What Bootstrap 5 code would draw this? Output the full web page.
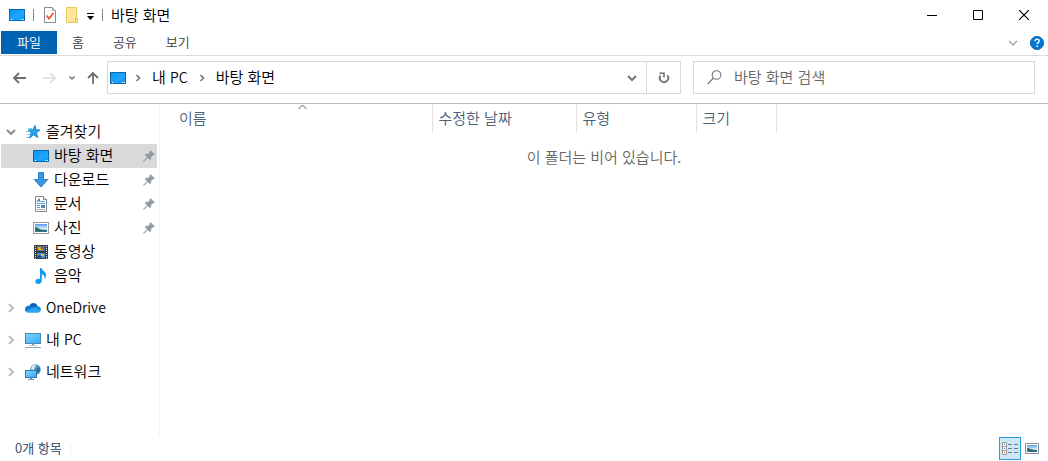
<!DOCTYPE html>
<html lang="ko">
<head>
<meta charset="utf-8">
<meta name="viewport" content="width=device-width, initial-scale=1">
<title>바탕 화면</title>
<link rel="stylesheet" href="https://cdn.jsdelivr.net/npm/bootstrap@5.3.0/dist/css/bootstrap.min.css">
<style>
  body { font-family: "Noto Sans CJK KR", sans-serif; font-size: 15px; font-weight: 350; line-height: 24px; color: #000; background: #fff; }
  svg { display: block; flex: none; }
  button { border: 0; padding: 0; background: none; color: inherit; font-size: inherit; font-weight: inherit; line-height: inherit; display: flex; align-items: center; justify-content: center; }
  .latin { font-size: 14px; }

  /* title bar */
  .titlebar { height: 30px; padding: 0 1px 0 9px; margin-bottom: 1px; }
  .tb-line { width: 1px; height: 12px; background: #888; }
  .tool-set { gap: 8px; }
  .win-btn { width: 46px; height: 30px; }

  /* ribbon tabs */
  .ribbon { height: 25px; padding-left: 1px; gap: 1px; border-bottom: 1px solid #dadbdc; font-size: 13px; color: #3b3b3b; }
  .ribbon-tab { height: 23px; padding: 0 14px 2px; }
  .ribbon-tab.file { background: #0063b1; color: #fff; padding: 0 16px 2px; }

  /* address row */
  .nav-row { height: 48px; border-bottom: 1px solid #b9b9b9; padding: 5px 13px 9px; }
  .history { gap: 12px; }
  .crumb-btn { padding: 0 2px 2px; }
  .field-row { display: grid; grid-template-columns: 574fr 342fr; gap: 12px; }
  .field-box { height: 33px; border: 1px solid #d9d9d9; min-width: 0; }
  .reload { width: 34px; border-left: 1px solid #d9d9d9; }
  .search-input { border: 0; outline: 0; padding: 0 0 2px; background: none; min-width: 0; color: #666; font-size: 15px; font-weight: inherit; line-height: 24px; }
  .search-input::placeholder { color: #666; opacity: 1; }

  /* navigation pane */
  .side { width: 160px; padding: 16px 2px 0 1px; border-right: 1px solid #f2f2f2; }
  .tree a { height: 24px; color: #000; text-decoration: none; padding-right: 2px; display: flex; align-items: center; }
  .tree .top-item { padding-left: 4px; }
  .tree .sub-item { padding-left: 32px; }
  .tree a.current { background: #d9d9d9; }
  .tree svg.twist { margin-right: 8px; }
  .tree .label { padding: 0 0 2px 5px; flex: 1; }

  /* file list */
  .files { table-layout: fixed; width: 100%; }
  .files th { font-weight: inherit; color: #4c607a; height: 28px; padding: 0 0 0 6px; border-right: 1px solid #e2e2e2; position: relative; }
  .files th:first-child { padding-left: 19px; }
  .files th.rest { border: 0; }
  .files td { padding: 13px 0 0; text-align: center; color: #666; }
  .sort-mark { position: absolute; top: 0; left: 51%; }

  /* status bar */
  .status { height: 25px; padding: 0 6px 0 15px; font-size: 13px; color: #1e395b; }
  .status-text { padding-bottom: 2px; }
  .status-line { width: 1px; height: 11px; background: #eee; }
  .view-btn { width: 21px; height: 23px; }
  .view-btn.on { width: 22px; background: #cce8f6; border: 1px solid #26a0da; }
</style>
</head>
<body>
<svg width="0" height="0" class="position-absolute" aria-hidden="true">
  <defs>
    <linearGradient id="gBlue" x1="0" y1="0" x2="1" y2="1"><stop offset="0" stop-color="#0a93f5"/><stop offset=".6" stop-color="#1fa6ff"/><stop offset="1" stop-color="#1295f2"/></linearGradient>
    <linearGradient id="gScreen" x1="0" y1="0" x2="1" y2="1"><stop offset="0" stop-color="#7fd3ff"/><stop offset=".5" stop-color="#58c2fd"/><stop offset="1" stop-color="#2fa8f5"/></linearGradient>
    <linearGradient id="gSky" x1="0" y1="0" x2="0" y2="1"><stop offset="0" stop-color="#4f97e8"/><stop offset=".55" stop-color="#d7ecfa"/><stop offset="1" stop-color="#8fc0dd"/></linearGradient>
    <symbol id="desk" viewBox="0 0 16 16">
      <rect x=".5" y="2.5" width="15" height="11" fill="url(#gBlue)" stroke="#0867ae"/>
      <path d="M2 12.500h1M12 12.500h1M14 12.500h1" stroke="#fff"/>
    </symbol>
    <symbol id="picture" viewBox="0 0 16 16">
      <rect x=".5" y="2.5" width="15" height="11" fill="#fff" stroke="#9a9a9a"/>
      <rect x="2" y="4" width="12" height="8" fill="url(#gSky)"/>
      <path d="M2 7c2 0 4 1.500 6 2.500 2 .5 4 .3 6 .5v1H2z" fill="#35705c"/>
      <path d="M2 11h12v1H2z" fill="#2f6fa3"/>
    </symbol>
    <symbol id="pin" viewBox="0 0 12 12">
      <path d="M7.500.5l4 4-1 .6-.7-.1-2 2c.3 1.200 0 2.200-.7 3L4.800 7.700 1.200 11.300.5 11.500l.2-.7L4.300 7.200 2 4.900c.8-.7 1.800-1 3-.7l2-2-.1-.7z" fill="#8f9aa3" stroke="#8f9aa3" stroke-width=".5"/>
    </symbol>
    <symbol id="closed" viewBox="0 0 12 12"><path d="M4 2l4 4-4 4" fill="none" stroke="#bcbcbc" stroke-width="1.800"/></symbol>
    <symbol id="crumb" viewBox="0 0 8 8"><path d="M2.500 1l3 3-3 3" fill="none" stroke="#757575" stroke-width="1.600"/></symbol>
  </defs>
</svg>

<div class="d-flex flex-column vh-100 overflow-hidden">
  <header>
    <div class="titlebar d-flex align-items-center">
      <div class="tool-set d-flex align-items-center">
        <svg width="16" height="16"><use href="#desk"/></svg>
        <span class="tb-line"></span>
        <button type="button" aria-label="속성">
          <svg width="15" height="16" viewBox="0 0 15 16"><path d="M2.500.5h8l3 3v12h-11z" fill="#fcfcfc" stroke="#8c8c8c"/><path d="M10.500.5v3h3" fill="#ddd" stroke="#a5a5a5"/><path d="M4.500 8.500l2.500 3L11.500 6" fill="none" stroke="#f0562b" stroke-width="1.800"/></svg>
        </button>
        <button type="button" aria-label="새 폴더">
          <svg width="14" height="16" viewBox="0 0 14 16"><path d="M1.500.5h10v11h1v4h-11z" fill="#ffe595" stroke="#ebc960"/><path d="M10.500 11.500h2v4h-2z" fill="#fff0bd" stroke="#e5bf50"/></svg>
        </button>
        <button type="button" aria-label="빠른 실행 도구 모음 사용자 지정" class="mt-1">
          <svg width="7" height="8" viewBox="0 0 7 8"><path d="M0 .5h7" stroke="#000"/><path d="M0 3h7L3.500 7z"/></svg>
        </button>
        <span class="tb-line"></span>
        <span>바탕 화면</span>
      </div>
      <div class="d-flex ms-auto">
        <button type="button" class="win-btn" aria-label="최소화"><svg width="10" height="10" viewBox="0 0 10 10"><path d="M0 5.500h10" stroke="#000"/></svg></button>
        <button type="button" class="win-btn" aria-label="최대화"><svg width="10" height="10" viewBox="0 0 10 10"><path d="M.5.5h9v9h-9z" fill="none" stroke="#000"/></svg></button>
        <button type="button" class="win-btn" aria-label="닫기"><svg width="10" height="10" viewBox="0 0 10 10"><path d="M0 0l10 10M10 0L0 10" stroke="#000" stroke-width="1.200"/></svg></button>
      </div>
    </div>

    <nav class="ribbon d-flex" aria-label="리본">
      <button type="button" class="ribbon-tab file">파일</button>
      <button type="button" class="ribbon-tab">홈</button>
      <button type="button" class="ribbon-tab">공유</button>
      <button type="button" class="ribbon-tab">보기</button>
      <div class="d-flex ms-auto align-items-center gap-2 pe-1">
        <button type="button" aria-label="리본 확장" class="me-1"><svg width="10" height="8" viewBox="0 0 10 8"><path d="M1 2l4 4 4-4" fill="none" stroke="#a0a0a0" stroke-width="1.300"/></svg></button>
        <button type="button" aria-label="도움말"><svg width="14" height="14" viewBox="0 0 14 14"><circle cx="7" cy="7" r="6.500" fill="#0078d7" stroke="#0a5fa8"/><path d="M4.900 5.200c0-1.300.9-2 2.100-2s2.200.7 2.200 1.900c0 1.500-2 1.500-2 3.200" fill="none" stroke="#fff" stroke-width="1.400"/><path d="M6.400 9.600h1.500v1.500H6.400z" fill="#fff"/></svg></button>
      </div>
    </nav>

    <div class="nav-row d-flex align-items-center">
      <div class="history d-flex align-items-center me-2">
        <button type="button" aria-label="뒤로" class="me-1"><svg width="14" height="12" viewBox="0 0 14 12"><path d="M13 6H1M6 1L1 6l5 5" fill="none" stroke="#6e6e6e" stroke-width="1.800"/></svg></button>
        <button type="button" aria-label="앞으로" disabled><svg width="14" height="12" viewBox="0 0 14 12"><path d="M0 6h12M7 1l5 5-5 5" fill="none" stroke="#dcdcdc" stroke-width="1.600"/></svg></button>
        <button type="button" aria-label="최근 위치"><svg width="6" height="6" viewBox="0 0 6 6"><path d="M.5 1.500L3 4l2.500-2.500" fill="none" stroke="#757575" stroke-width="1.500"/></svg></button>
        <button type="button" aria-label="위로"><svg width="12" height="14" viewBox="0 0 12 14"><path d="M6 13V2M1 7l5-5 5 5" fill="none" stroke="#6e6e6e" stroke-width="1.800"/></svg></button>
      </div>
      <div class="field-row flex-grow-1">
        <div class="field-box d-flex align-items-stretch">
          <div class="d-flex align-items-center flex-grow-1 pe-1" style="padding-left:2px">
            <svg width="16" height="16"><use href="#desk"/></svg>
            <svg width="8" height="8" class="ms-2"><use href="#crumb"/></svg>
            <button type="button" class="crumb-btn ms-2">내&nbsp;<span class="latin">PC</span></button>
            <svg width="8" height="8" class="ms-2"><use href="#crumb"/></svg>
            <button type="button" class="crumb-btn ms-2">바탕 화면</button>
            <button type="button" aria-label="이전 위치" class="ms-auto me-1"><svg width="12" height="8" viewBox="0 0 12 8"><path d="M2 2l4 4 4-4" fill="none" stroke="#757575" stroke-width="2"/></svg></button>
          </div>
          <button type="button" class="reload" aria-label="새로 고침"><svg width="12" height="12" viewBox="0 0 12 12"><path d="M9.300 3.300A4.200 4.200 0 1 1 2.500 3.600" fill="none" stroke="#707070" stroke-width="1.800"/><path d="M1.500 1.200h4.500v4.200" fill="none" stroke="#707070" stroke-width="1.600"/></svg></button>
        </div>
        <label class="field-box d-flex align-items-center ps-2">
          <svg width="16" height="15" viewBox="0 0 16 15" class="ms-1 me-1"><circle cx="10.500" cy="5" r="4.300" fill="none" stroke="#777" stroke-width="1.100"/><path d="M7.300 8.200L1.700 14" stroke="#777" stroke-width="1.300"/></svg>
          <input type="text" class="search-input flex-grow-1 ms-2" placeholder="바탕 화면 검색" aria-label="바탕 화면 검색">
        </label>
      </div>
    </div>
  </header>

  <div class="d-flex flex-grow-1">
    <nav class="side flex-shrink-0" aria-label="탐색 창">
      <ul class="tree list-unstyled mb-2">
        <li><a href="#" class="top-item"><svg class="twist" width="12" height="12" viewBox="0 0 12 12"><path d="M2 4l4 4 4-4" fill="none" stroke="#858585" stroke-width="1.800"/></svg><svg width="16" height="16" viewBox="0 0 16 16"><path d="M10 1.500l1 4.300 4 .2-3.500 2.700 1 4.800-3.900-2.700L4.500 14l1.800-5-3-3 4.500-.2z" fill="#2f9fe8" stroke="#1786d2"/><path d="M3 4.500h4M1 7.500h4M2 10.500h3M1 13.500h3" stroke="#7cc4f2"/></svg><span class="label">즐겨찾기</span></a></li>
        <li><a href="#" class="sub-item current"><svg width="16" height="16"><use href="#desk"/></svg><span class="label">바탕 화면</span><svg width="12" height="12"><use href="#pin"/></svg></a></li>
        <li><a href="#" class="sub-item"><svg width="16" height="16" viewBox="0 0 16 16"><path d="M5.500.5h5v7h4.300L8 15 1.200 7.500h4.300z" fill="#3b97e3" stroke="#2a7dc7"/></svg><span class="label">다운로드</span><svg width="12" height="12"><use href="#pin"/></svg></a></li>
        <li><a href="#" class="sub-item"><svg width="16" height="16" viewBox="0 0 16 16"><path d="M2.500.5h8l3 3v12h-11z" fill="#fff" stroke="#8a8a8a"/><path d="M10.500.5v3h3" fill="#eee" stroke="#8a8a8a"/><path d="M4 6l2-3 1 3" fill="none" stroke="#2b86c8" stroke-width="1.200"/><path d="M8 5.500h4M4 7.500h8M4 9.500h3M4 11.500h3" stroke="#4a9fd6"/><path d="M4 13.500h8" stroke="#99bbbb"/><path d="M8 9h4v3H8z" fill="#4a86b5"/></svg><span class="label">문서</span><svg width="12" height="12"><use href="#pin"/></svg></a></li>
        <li><a href="#" class="sub-item"><svg width="16" height="16"><use href="#picture"/></svg><span class="label">사진</span><svg width="12" height="12"><use href="#pin"/></svg></a></li>
        <li><a href="#" class="sub-item"><svg width="16" height="16" viewBox="0 0 16 16"><path d="M1 1h14v14H1z" fill="#3a3a3a"/><path d="M2.500 2v13M13.500 2v13" stroke="#e8e8e8" stroke-dasharray="1 1"/><path d="M4 2h8v5H4z" fill="#3f76c9"/><path d="M4 9h8v5H4z" fill="#4b8ee0"/><path d="M5 3h5v3H5z" fill="#e8b21c"/><path d="M8 3h2v2H8z" fill="#c6352b"/><path d="M8 10h3v2H8z" fill="#e8c13a"/><path d="M4 12l3-1 2 3H4z" fill="#274e8f"/></svg><span class="label">동영상</span></a></li>
        <li><a href="#" class="sub-item"><svg width="16" height="16" viewBox="0 0 16 16"><path d="M7 0h1.500c.3 2.800 4.700 3.700 4.700 7.200 0 1.500-.8 2.900-2 3.800.8-2.300.2-4-2.300-4.800V12.500c0 1.900-1.700 3.400-3.900 3.400-1.600 0-2.700-.9-2.700-2.200 0-1.700 1.800-3 3.500-3 .5 0 .9.1 1.200.2z" fill="#129df5"/></svg><span class="label">음악</span></a></li>
      </ul>
      <ul class="tree list-unstyled d-flex flex-column gap-2 mb-0">
        <li><a href="#" class="top-item"><svg class="twist" width="12" height="12"><use href="#closed"/></svg><svg width="16" height="16" viewBox="0 0 16 16"><path d="M4.500 6C5 4 6.500 3 8.300 3c2 0 3.600 1.100 4.200 3l-3 3-6-2z" fill="#0a5fb8"/><path d="M3.500 5.800c2-.4 3.500.2 5 1.200L3 12.500C1.300 12.300 0 11 0 9.300c0-1.900 1.500-3.300 3.500-3.500z" fill="#1177d1"/><path d="M8.500 7.200C10 6 11 5.700 12.500 6c2 .4 3.500 1.600 3.500 3.500l-1 1.500z" fill="#1689dc"/><path d="M8.500 7.200l7.200 3.600c-.5 1.100-1.500 1.900-2.900 1.900H3.500c-1 0-2-.6-2.600-1.400z" fill="#29a5ea"/></svg><span class="label latin">OneDrive</span></a></li>
        <li><a href="#" class="top-item"><svg class="twist" width="12" height="12"><use href="#closed"/></svg><svg width="16" height="16" viewBox="0 0 16 16"><rect x=".5" y="1.500" width="15" height="10" fill="url(#gScreen)" stroke="#4c86a8"/><path d="M7 12h2v1H7zM4 13h8v.5H4z" fill="#7b95a8"/><path d="M0 15.500h16" stroke="#8ea3b3"/></svg><span class="label">내 <span class="latin">PC</span></span></a></li>
        <li><a href="#" class="top-item"><svg class="twist" width="12" height="12"><use href="#closed"/></svg><svg width="16" height="16" viewBox="0 0 16 16"><circle cx="10.500" cy="5.500" r="5.300" fill="#4a9ac4"/><path d="M7 2c2-1.500 4-1.500 4-.5S9 4 9 5.500 7 6 6 5z" fill="#cde5ee"/><path d="M12 4c2-1 3 0 3.200 1.500C15 8 13 9 12 8s-1-3 0-4z" fill="#2d6f99"/><rect x=".5" y="6.500" width="11" height="7" fill="url(#gScreen)" stroke="#3279a5"/><path d="M5 14h2v1H5zM3 15h6v1H3z" fill="#7b95a8"/></svg><span class="label">네트워크</span></a></li>
      </ul>
    </nav>

    <main class="flex-grow-1">
      <table class="files">
        <colgroup><col style="width:272px"><col style="width:144px"><col style="width:120px"><col style="width:80px"><col></colgroup>
        <thead>
          <tr>
            <th scope="col" aria-sort="ascending">이름<svg class="sort-mark" width="9" height="6" viewBox="0 0 9 6"><path d="M.5 5l4-4 4 4" fill="none" stroke="#5a5a5a"/></svg></th>
            <th scope="col">수정한 날짜</th>
            <th scope="col">유형</th>
            <th scope="col">크기</th>
            <th class="rest"></th>
          </tr>
        </thead>
        <tbody><tr><td colspan="5">이 폴더는 비어 있습니다.</td></tr></tbody>
      </table>
    </main>
  </div>

  <footer class="status d-flex align-items-center">
    <span class="status-text">0개 항목</span>
    <span class="status-line ms-2"></span>
    <div class="d-flex align-items-center ms-auto">
      <button type="button" class="view-btn on" aria-label="자세히"><svg width="16" height="13" viewBox="0 0 16 13"><path d="M.5.5h4v12h-4zM.5 4.500h4M.5 8.500h4" fill="#fff" stroke="#9a9a9a"/><path d="M2 2.500h1M2 6.500h1" stroke="#3a7fb8"/><path d="M2 10.500h1" stroke="#c0392b"/><path d="M6 2.500h4M12 2.500h4M6 6.500h4M12 6.500h4M6 10.500h4M12 10.500h4" stroke="#6c7a83"/></svg></button>
      <button type="button" class="view-btn" aria-label="큰 아이콘"><svg width="14" height="11" viewBox="0 0 14 11"><path d="M.5.5h13v10H.5z" fill="#fff" stroke="#8e8e8e"/><path d="M2 2h10v7H2z" fill="url(#gSky)"/><path d="M2 5c3 0 4 2 10 2v1H2z" fill="#35705c"/><path d="M2 8h10v1H2z" fill="#2f6fa3"/></svg></button>
    </div>
  </footer>
</div>
<script src="https://cdn.jsdelivr.net/npm/bootstrap@5.3.0/dist/js/bootstrap.bundle.min.js"></script>
</body>
</html>
